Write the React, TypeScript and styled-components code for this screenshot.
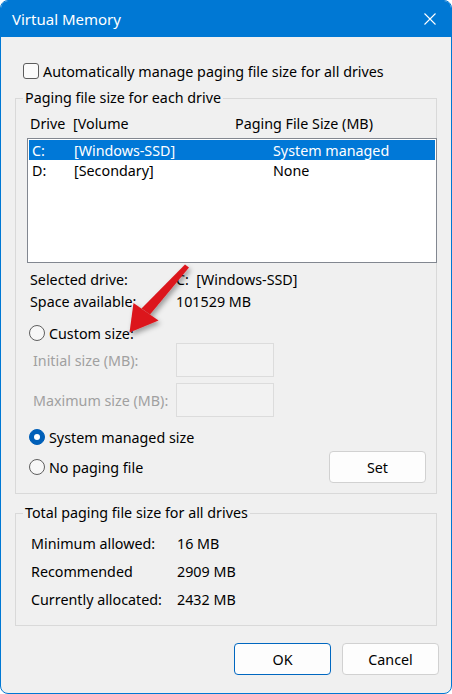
import * as React from "react";
import styled, { createGlobalStyle } from "styled-components";

const COLORS = {
  accent: "#0078d4",
  select: "#0078d7",
  radio: "#005fb8",
  face: "#f0f0f0",
  groupLine: "#d9d9d9",
  listLine: "#828790",
  disabled: "#a0a0a0",
  red: "#dc161c",
};

const GlobalStyle = createGlobalStyle`
  html, body {
    margin: 0;
    padding: 0;
    background: #ffffff;
  }
  body {
    font-family: "Noto Sans", "Open Sans", sans-serif;
    font-size: 14.3px;
    color: #000000;
  }
  * {
    box-sizing: border-box;
  }
`;

const Window = styled.div`
  position: relative;
  width: 452px;
  height: 694px;
  background: ${COLORS.face};
  border: 1px solid ${COLORS.accent};
  border-radius: 8px;
  overflow: hidden;
  display: flex;
  flex-direction: column;
`;

const TitleBar = styled.div`
  height: 36px;
  flex: none;
  background: ${COLORS.accent};
  color: #ffffff;
  display: flex;
  align-items: center;
  justify-content: space-between;
  padding: 0 15px 0 11px;
  font-size: 15px;
`;

const CloseGlyph = styled.svg`
  width: 12px;
  height: 12px;
  display: block;
`;

const Body = styled.div`
  padding: 24px 14px 0 14px;
  display: flex;
  flex-direction: column;
`;

const CheckRow = styled.label`
  display: flex;
  align-items: center;
  gap: 4px;
  height: 20px;
  margin-left: 8px;
`;

const CheckBox = styled.span`
  width: 16px;
  height: 16px;
  border: 1px solid #5c5c5c;
  border-radius: 3px;
  background: #fbfbfb;
`;

const Group = styled.fieldset<{ $top: number; $bottom: number }>`
  margin: ${(p) => p.$top}px 0 0 0;
  padding: 0 0 ${(p) => p.$bottom}px 0;
  border: 1px solid ${COLORS.groupLine};
  min-width: 0;
`;

const Legend = styled.legend`
  margin-left: 7px;
  padding: 0 2px;
  line-height: 20px;
  font-size: 14.3px;
`;

const HeaderRow = styled.div`
  display: grid;
  grid-template-columns: 43px 162px auto;
  height: 20px;
  align-items: center;
  margin-top: 5px;
  padding-left: 14px;
`;

const ListBox = styled.div`
  margin: 5px -1px 0 11px;
  height: 125px;
  background: #ffffff;
  border: 1px solid ${COLORS.listLine};
  padding: 1px;
`;

const ListRow = styled.div<{ $selected?: boolean }>`
  display: grid;
  grid-template-columns: 42px 199px auto;
  height: 20px;
  align-items: center;
  padding-left: 3px;
  background: ${(p) => (p.$selected ? COLORS.select : "transparent")};
  color: ${(p) => (p.$selected ? "#ffffff" : "#000000")};
`;

const InfoGrid = styled.div<{ $top: number; $row: number; $left: number }>`
  display: grid;
  grid-template-columns: 146px auto;
  grid-auto-rows: ${(p) => p.$row}px;
  align-items: center;
  margin-top: ${(p) => p.$top}px;
  padding-left: ${(p) => p.$left}px;
`;

const RadioRow = styled.label<{ $top: number }>`
  display: flex;
  align-items: center;
  gap: 4px;
  height: 20px;
  margin-top: ${(p) => p.$top}px;
  margin-left: 13px;
`;

const RadioDot = styled.span<{ $checked?: boolean }>`
  width: 16px;
  height: 16px;
  border-radius: 50%;
  flex: none;
  display: flex;
  align-items: center;
  justify-content: center;
  border: 1px solid ${(p) => (p.$checked ? COLORS.radio : "#5f5f5f")};
  background: ${(p) => (p.$checked ? COLORS.radio : "#f7f7f7")};

  &::after {
    content: "";
    width: 6px;
    height: 6px;
    border-radius: 50%;
    background: #ffffff;
    display: ${(p) => (p.$checked ? "block" : "none")};
  }
`;

const SizeRow = styled.div<{ $top: number }>`
  display: grid;
  grid-template-columns: 143px 98px;
  align-items: center;
  height: 34px;
  margin-top: ${(p) => p.$top}px;
  padding-left: 17px;
  color: ${COLORS.disabled};
`;

const SizeInput = styled.div`
  height: 34px;
  border: 1px solid #dcdcdc;
  background: #f2f2f2;
`;

const SplitRow = styled.div`
  display: flex;
  align-items: center;
  justify-content: space-between;
  height: 32px;
  margin: 4px 10px 0 0;
`;

const Button = styled.button<{ $default?: boolean }>`
  width: 97px;
  height: 32px;
  font-family: inherit;
  font-size: 14.3px;
  color: #000000;
  background: #fdfdfd;
  border: 1px solid ${(p) => (p.$default ? "#0067c0" : "#d1d1d1")};
  border-radius: 4px;
  padding: 0;
`;

const Footer = styled.div`
  display: flex;
  justify-content: flex-end;
  gap: 11px;
  margin: 17px -2px 0 0;
`;

const Overlay = styled.svg`
  position: absolute;
  left: -1px;
  top: -1px;
  width: 452px;
  height: 694px;
  pointer-events: none;
`;

const drives = [
  { letter: "C:", volume: "[Windows-SSD]", size: "System managed", selected: true },
  { letter: "D:", volume: "[Secondary]", size: "None", selected: false },
];

const totals = [
  ["Minimum allowed:", "16 MB"],
  ["Recommended", "2909 MB"],
  ["Currently allocated:", "2432 MB"],
];

export default function App() {
  return (
    <>
      <GlobalStyle />
      <Window>
        <TitleBar>
          <span>Virtual Memory</span>
          <CloseGlyph viewBox="0 0 12 12">
            <path d="M0.5 0.5 L11.5 11.5 M11.5 0.5 L0.5 11.5" stroke="#ffffff" strokeWidth="1.1" />
          </CloseGlyph>
        </TitleBar>
        <Body>
          <CheckRow>
            <CheckBox />
            <span>Automatically manage paging file size for all drives</span>
          </CheckRow>

          <Group $top={7} $bottom={10}>
            <Legend>Paging file size for each drive</Legend>
            <HeaderRow>
              <span>Drive</span>
              <span>[Volume</span>
              <span>Paging File Size (MB)</span>
            </HeaderRow>
            <ListBox>
              {drives.map((d) => (
                <ListRow key={d.letter} $selected={d.selected}>
                  <span>{d.letter}</span>
                  <span>{d.volume}</span>
                  <span>{d.size}</span>
                </ListRow>
              ))}
            </ListBox>

            <InfoGrid $top={5} $row={22} $left={14}>
              <span>Selected drive:</span>
              <span>C:&nbsp; [Windows-SSD]</span>
              <span>Space available:</span>
              <span>101529 MB</span>
            </InfoGrid>

            <RadioRow $top={11}>
              <RadioDot />
              <span>Custom size:</span>
            </RadioRow>
            <SizeRow $top={0}>
              <span>Initial size (MB):</span>
              <SizeInput />
            </SizeRow>
            <SizeRow $top={6}>
              <span>Maximum size (MB):</span>
              <SizeInput />
            </SizeRow>

            <RadioRow $top={10}>
              <RadioDot $checked />
              <span>System managed size</span>
            </RadioRow>
            <SplitRow>
              <RadioRow $top={0}>
                <RadioDot />
                <span>No paging file</span>
              </RadioRow>
              <Button>Set</Button>
            </SplitRow>
          </Group>

          <Group $top={9} $bottom={12}>
            <Legend>Total paging file size for all drives</Legend>
            <InfoGrid $top={6} $row={28} $left={15}>
              {totals.map(([label, value]) => (
                <React.Fragment key={label}>
                  <span>{label}</span>
                  <span>{value}</span>
                </React.Fragment>
              ))}
            </InfoGrid>
          </Group>

          <Footer>
            <Button $default>OK</Button>
            <Button>Cancel</Button>
          </Footer>
        </Body>

        {/* red annotation arrow laid over the dialog */}
        <Overlay viewBox="0 0 452 694">
          <defs>
            <filter id="arrowShadow" x="-30%" y="-30%" width="160%" height="160%">
              <feDropShadow dx="2" dy="3" stdDeviation="2.5" floodColor="#000" floodOpacity="0.35" />
            </filter>
          </defs>
          <g fill={COLORS.red} filter="url(#arrowShadow)">
            <polygon points="185,264.5 189,267.5 150,314.5 141.5,308.5" />
            <polygon points="129.5,332.5 133.5,303 158.5,320.5" />
          </g>
        </Overlay>
      </Window>
    </>
  );
}
